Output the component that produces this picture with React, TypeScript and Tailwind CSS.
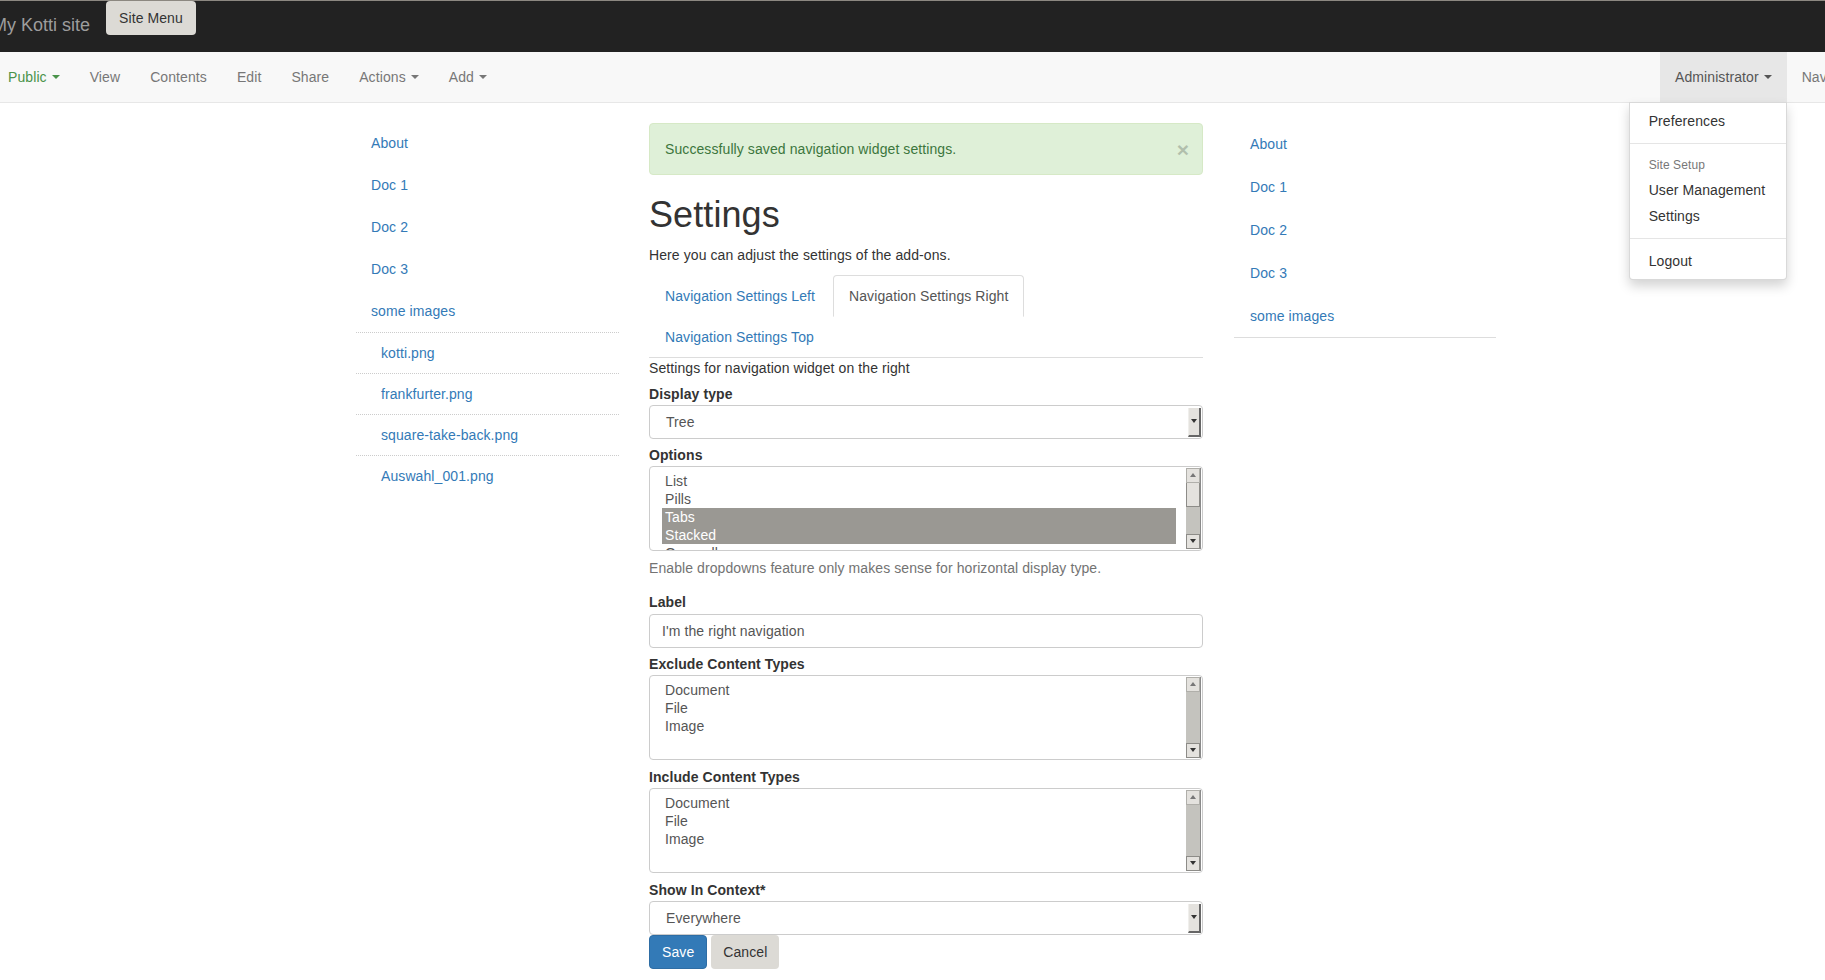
import React from "react";

const Caret = () => (
  <span className="inline-block w-0 h-0 ml-[5px] align-middle border-t-4 border-x-4 border-x-transparent border-b-0" />
);

const UpArrow = () => (
  <span className="w-0 h-0 border-b-[4px] border-x-[3px] border-x-transparent border-b-[#777]" />
);
const DownArrow = () => (
  <span className="w-0 h-0 border-t-[4px] border-x-[3px] border-x-transparent border-t-[#333]" />
);

const ScrollBar = ({ thumb }: { thumb?: boolean }) => (
  <div className="w-[15px] my-[1px] mr-[1px] flex flex-col bg-[#c4c3be] border-r border-[#8a8a8a]">
    <div className="h-[15px] bg-[#e4e2de] border border-[#b0afaa] flex items-center justify-center">
      <UpArrow />
    </div>
    {thumb && <div className="h-[24px] bg-[#e4e2de] border border-[#8d8c88] border-t-0" />}
    <div className="flex-1" />
    <div className="h-[15px] bg-[#e4e2de] border border-[#8d8c88] flex items-center justify-center">
      <DownArrow />
    </div>
  </div>
);

const SelectBox = ({ value }: { value: string }) => (
  <div className="h-[34px] border border-[#ccc] rounded-[4px] flex items-stretch bg-white">
    <div className="flex-1 pl-[16px] flex items-center text-[#555]">{value}</div>
    <div className="w-[13px] mt-[2px] mb-[1px] mr-[1px] bg-[#e4e2de] border-r-2 border-b-2 border-[#666] border-l border-l-[#f0efec] flex items-center justify-center">
      <DownArrow />
    </div>
  </div>
);

const ListBox = ({ items, selected = [], thumb }: { items: string[]; selected?: string[]; thumb?: boolean }) => (
  <div className="h-[85px] border border-[#ccc] rounded-[4px] flex items-stretch bg-white overflow-hidden">
    <div className="flex-1 pt-[5px] pl-[12px] pr-[10px] overflow-hidden text-[#555]">
      {items.map((it) => (
        <div
          key={it}
          className={
            selected.includes(it)
              ? "h-[18px] leading-[18px] pl-[3px] bg-[#9a9893] text-white"
              : "h-[18px] leading-[18px] pl-[3px]"
          }
        >
          {it}
        </div>
      ))}
    </div>
    <ScrollBar thumb={thumb} />
  </div>
);

const Label = ({ children, className = "" }: { children: React.ReactNode; className?: string }) => (
  <div className={"font-bold leading-[20px] text-[#333] " + className}>{children}</div>
);

export default function App() {
  const leftMain = ["About", "Doc 1", "Doc 2", "Doc 3", "some images"];
  const leftSub = ["kotti.png", "frankfurter.png", "square-take-back.png", "Auswahl_001.png"];
  return (
    <div className="w-full min-h-[980px] bg-white overflow-hidden text-[14px] leading-[20px] tracking-[0.09px] text-[#333] font-['Liberation_Sans',Arial,sans-serif]">
      {/* top dark bar */}
      <div className="h-[52px] bg-[#222] border-t border-[#8c8881] flex items-start">
        <span className="ml-[-8px] mt-[14px] text-[18px] leading-[20px] tracking-normal text-[#9d9d9d] whitespace-nowrap">My Kotti site</span>
        <div className="ml-[16px] h-[34px] px-[13px] flex items-center bg-[#dcdad5] rounded-[4px] text-[#333] whitespace-nowrap">
          Site Menu
        </div>
      </div>

      {/* navbar */}
      <div className="h-[51px] bg-[#f8f8f8] border-b border-[#e7e7e7] flex text-[#777] whitespace-nowrap">
        <div className="flex flex-1 ml-[-7px]">
          <div className="px-[15px] flex items-center text-[#4a934a]">
            Public
            <Caret />
          </div>
          <div className="px-[15px] flex items-center">View</div>
          <div className="px-[15px] flex items-center">Contents</div>
          <div className="px-[15px] flex items-center">Edit</div>
          <div className="px-[15px] flex items-center">Share</div>
          <div className="px-[15px] flex items-center">
            Actions
            <Caret />
          </div>
          <div className="px-[15px] flex items-center">
            Add
            <Caret />
          </div>
        </div>
        <div className="w-[165px] shrink-0 flex">
          <div className="relative px-[15px] flex items-center bg-[#e7e7e7] text-[#555]">
            Administrator
            <Caret />
            <div className="absolute top-full right-0 w-[158px] bg-white border border-[rgba(0,0,0,0.15)] rounded-b-[4px] shadow-[0_6px_12px_rgba(0,0,0,0.175)] py-[5px] z-10 text-[#333]">
              <div className="px-[19px] leading-[26px]">Preferences</div>
              <div className="my-[9px] h-px bg-[#e5e5e5]" />
              <div className="px-[19px] text-[12px] leading-[24px] text-[#777]">Site Setup</div>
              <div className="px-[19px] leading-[26px]">User Management</div>
              <div className="px-[19px] leading-[26px]">Settings</div>
              <div className="my-[9px] h-px bg-[#e5e5e5]" />
              <div className="px-[19px] leading-[26px]">Logout</div>
            </div>
          </div>
          <div className="px-[15px] flex items-center">Navigation</div>
        </div>
      </div>

      {/* body */}
      <div className="flex pl-[356px]">
        {/* left nav */}
        <div className="w-[263px] shrink-0 pt-[19px] text-[#337ab7]">
          {leftMain.map((t) => (
            <div key={t} className="h-[42px] pl-[15px] flex items-center">
              {t}
            </div>
          ))}
          {leftSub.map((t) => (
            <div key={t} className="h-[41px] border-t border-dotted border-[#ccc] pl-[25px] flex items-center">
              {t}
            </div>
          ))}
        </div>

        {/* main */}
        <div className="w-[554px] shrink-0 ml-[30px] pt-[20px]">
          <div className="h-[52px] border border-[#d6e9c6] bg-[#dff0d8] rounded-[4px] px-[15px] flex items-center text-[#3c763d]">
            <span>Successfully saved navigation widget settings.</span>
            <span className="ml-auto mr-[-2px] text-[21px] font-bold leading-none text-black opacity-20">×</span>
          </div>
          <h1 className="mt-[20px] text-[36px] leading-[39.6px] font-normal text-[#333]">Settings</h1>
          <p className="mt-[10px] leading-[20px]">Here you can adjust the settings of the add-ons.</p>

          <div className="mt-[10px] flex flex-wrap border-b border-[#ddd]">
            <div className="mr-[2px] mb-[-1px]">
              <div className="px-[15px] py-[10px] border border-transparent rounded-t-[4px] text-[#337ab7]">Navigation Settings Left</div>
            </div>
            <div className="mr-[2px] mb-[-1px]">
              <div className="px-[15px] py-[10px] border border-[#ddd] border-b-transparent rounded-t-[4px] bg-white text-[#555]">
                Navigation Settings Right
              </div>
            </div>
            <div className="basis-full h-0" />
            <div className="mr-[2px] mb-[-1px]">
              <div className="px-[15px] py-[10px] border border-transparent rounded-t-[4px] text-[#337ab7]">Navigation Settings Top</div>
            </div>
          </div>

          <div className="leading-[20px]">Settings for navigation widget on the right</div>
          <Label className="mt-[6px]">Display type</Label>
          <div className="mt-[1px]">
            <SelectBox value="Tree" />
          </div>
          <Label className="mt-[6px]">Options</Label>
          <div className="mt-[1px]">
            <ListBox items={["List", "Pills", "Tabs", "Stacked", "Open all"]} selected={["Tabs", "Stacked"]} thumb />
          </div>
          <div className="mt-[7px] text-[#737373]">Enable dropdowns feature only makes sense for horizontal display type.</div>
          <Label className="mt-[14px]">Label</Label>
          <div className="mt-[2px] h-[34px] border border-[#ccc] rounded-[4px] px-[12px] flex items-center text-[#555]">
            I'm the right navigation
          </div>
          <Label className="mt-[6px]">Exclude Content Types</Label>
          <div className="mt-[1px]">
            <ListBox items={["Document", "File", "Image"]} />
          </div>
          <Label className="mt-[7px]">Include Content Types</Label>
          <div className="mt-[1px]">
            <ListBox items={["Document", "File", "Image"]} />
          </div>
          <Label className="mt-[7px]">Show In Context*</Label>
          <div className="mt-[1px]">
            <SelectBox value="Everywhere" />
          </div>
          <div className="flex gap-[4px]">
            <div className="h-[34px] px-[12px] flex items-center bg-[#337ab7] border border-[#2e6da4] rounded-[4px] text-white">Save</div>
            <div className="h-[34px] px-[12px] flex items-center bg-[#dcdad5] rounded-[4px] text-[#333]">Cancel</div>
          </div>
        </div>

        {/* right nav */}
        <div className="w-[262px] shrink-0 ml-[31px] pt-[19px]">
          <div className="border-b border-[#ddd] text-[#337ab7]">
            {leftMain.map((t) => (
              <div key={t} className="h-[43px] pl-[16px] flex items-center">
                {t}
              </div>
            ))}
          </div>
        </div>
      </div>
    </div>
  );
}
